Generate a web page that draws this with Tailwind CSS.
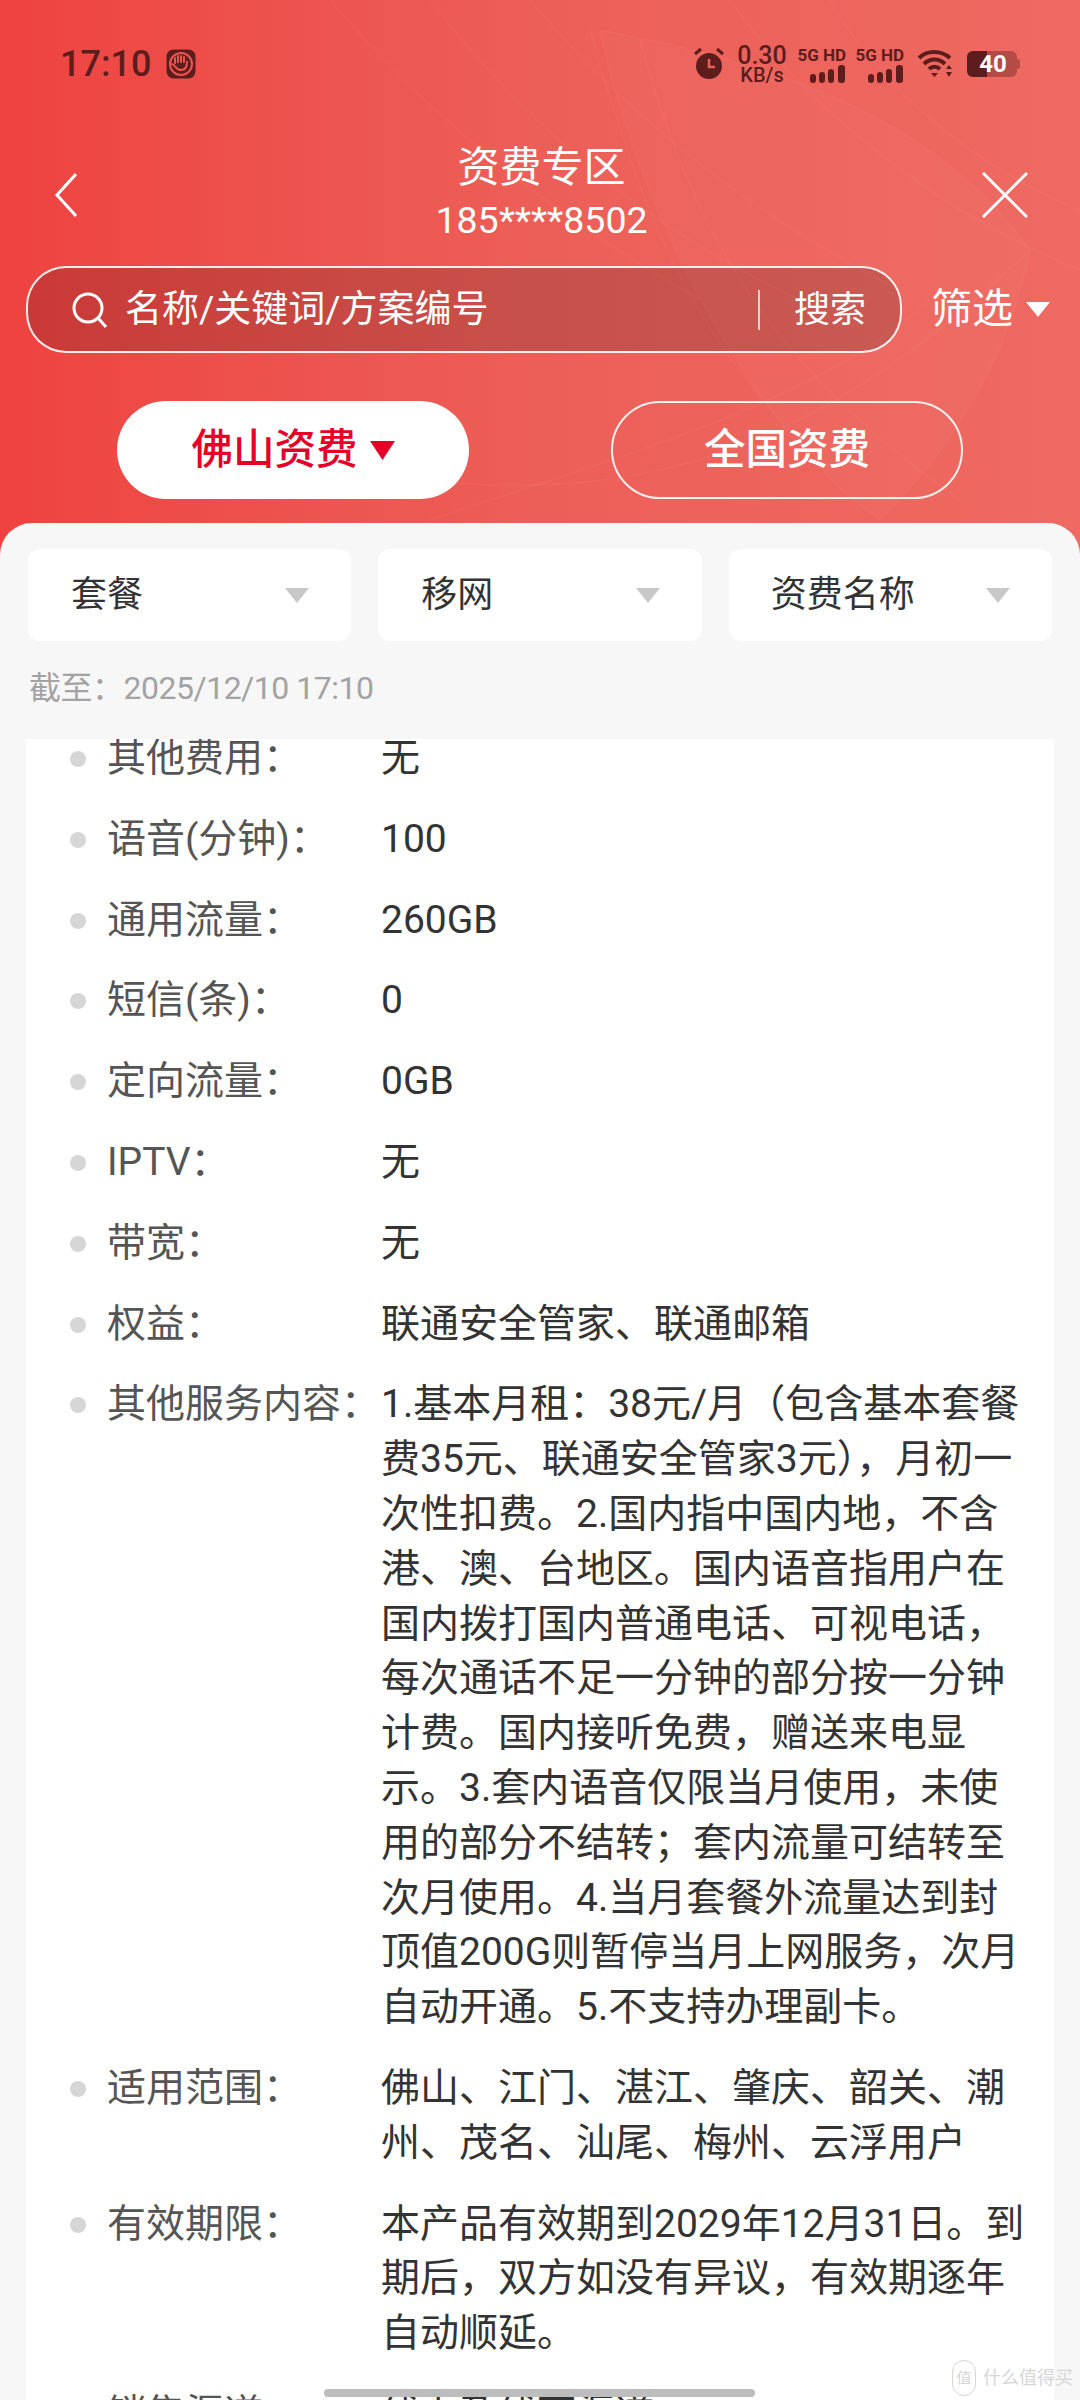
<!DOCTYPE html>
<html lang="zh-CN">
<head>
<meta charset="utf-8">
<script src="https://cdn.jsdelivr.net/npm/@tailwindcss/browser@4"></script>
</head>
<body>
<div class="relative w-[1080px] h-[2400px] overflow-hidden flex flex-col bg-gradient-to-r from-[#ee4240] via-[#ec5f58] to-[#ee6a62] font-['Roboto','Noto_Sans_CJK_SC',sans-serif]">
  <svg class="absolute left-0 top-0 pointer-events-none" width="1080" height="560" viewBox="0 0 1080 560" fill="none" stroke="#ffffff" stroke-opacity="0.05" stroke-width="1">
    <path d="M600 30 C760 60 930 110 1030 250 C1010 350 960 440 880 520 C760 440 640 220 600 30 Z" fill="#ffffff" fill-opacity="0.025"/>
    <path d="M590 30 C640 200 680 330 830 470"/>
    <path d="M640 40 C690 220 760 360 960 500"/>
    <path d="M420 480 C620 500 800 470 1030 250"/>
    <path d="M330 0 C430 120 560 220 700 300"/>
    <path d="M430 0 C530 130 650 230 800 300"/>
    <path d="M530 0 C630 120 760 220 900 290"/>
    <path d="M730 0 C800 100 930 210 1080 270"/>
    <path d="M830 0 C880 90 980 170 1080 210"/>
    <path d="M430 520 C640 450 820 400 930 300"/>
  </svg>

  <!-- status bar -->
  <div class="relative mt-[32px] h-[64px] pl-[60px] pr-[60px] flex items-center justify-between text-[#5e1d1d]">
    <div class="flex items-center gap-[15px]">
      <span class="text-[36px] font-medium leading-none">17:10</span>
      <svg width="30" height="30" viewBox="0 0 30 30"><rect x="0.5" y="0.5" width="29" height="29" rx="7" fill="#5e1d1d"/><circle cx="15" cy="15" r="11" fill="none" stroke="#ee5550" stroke-width="2"/><path d="M9 14 V9 M12 13 V7 M15 13 V7 M18 13 V8 M6 15 C9 15 9 21 15 21 C19 21 21 18 21 13" fill="none" stroke="#ee5550" stroke-width="2" stroke-linecap="round"/></svg>
    </div>
    <div class="flex items-center">
      <svg width="34" height="34" viewBox="0 0 34 34" class="mr-[11px]"><circle cx="17" cy="19" r="13" fill="#5e1d1d"/><path d="M17 12 V20 H23" fill="none" stroke="#ec5f58" stroke-width="2.5"/><path d="M3 7 L9 2 M31 7 L25 2" stroke="#5e1d1d" stroke-width="3"/></svg>
      <div class="w-[50px] flex flex-col items-center mr-[10px]">
        <span class="text-[25px] font-medium leading-[25px]">0.30</span>
        <span class="text-[20px] font-medium leading-[20px] whitespace-nowrap -mt-[3px]">KB/s</span>
      </div>
      <div class="w-[49px] flex flex-col items-end mr-[9px]">
        <span class="text-[17px] font-bold leading-[20px] whitespace-nowrap">5G HD</span>
        <svg width="36" height="18" viewBox="0 0 36 18" fill="#5e1d1d"><rect x="0" y="9" width="6" height="9" rx="3"/><rect x="9" y="7" width="6" height="11" rx="3"/><rect x="18" y="4" width="6" height="14" rx="3"/><rect x="28" y="0" width="7" height="18" rx="3"/></svg>
      </div>
      <div class="w-[49px] flex flex-col items-end mr-[14px]">
        <span class="text-[17px] font-bold leading-[20px] whitespace-nowrap">5G HD</span>
        <svg width="36" height="18" viewBox="0 0 36 18" fill="#5e1d1d"><rect x="0" y="9" width="6" height="9" rx="3"/><rect x="9" y="7" width="6" height="11" rx="3"/><rect x="18" y="4" width="6" height="14" rx="3"/><rect x="28" y="0" width="7" height="18" rx="3"/></svg>
      </div>
      <svg width="38" height="28" viewBox="0 0 38 28" fill="none" stroke="#5e1d1d" stroke-width="4" class="mr-[11px]"><path d="M1 8 C9 0 23 0 32 8"/><path d="M6 14 C12 8 21 8 27 14"/><path d="M11 19 C14 16 19 16 22 19"/><path d="M13 23 L16.500 27 L20 23 Z" fill="#5e1d1d" stroke="none"/><path d="M31 15 L34 19 H28 Z M31 27 L34 22 H28 Z" fill="#5e1d1d" stroke="none"/></svg>
      <div class="relative w-[53px] h-[26px] flex items-center">
        <div class="w-[50px] h-[26px] rounded-[6px] bg-[#5e1d1d]/40 overflow-hidden"><div class="w-[20px] h-[26px] bg-[#5e1d1d]"></div></div>
        <div class="w-[3px] h-[10px] rounded-r-[2px] bg-[#5e1d1d]/40"></div>
        <span class="absolute left-[10px] top-0 w-[32px] text-center text-[24px] leading-[26px] font-bold text-white">40</span>
      </div>
    </div>
  </div>

  <!-- nav -->
  <div class="relative mt-[44px] pl-[55px] pr-[52px] grid grid-cols-[1fr_auto_1fr] items-center text-white">
    <svg class="mt-[6px]" width="22" height="44" viewBox="0 0 22 44" fill="none" stroke="#ffffff" stroke-width="3"><path d="M21 1 L2 22 L21 43"/></svg>
    <div class="flex flex-col items-center">
      <span class="text-[42px] leading-[56px]">资费专区</span>
      <span class="text-[37.500px] leading-[48px]">185****8502</span>
    </div>
    <svg class="justify-self-end mt-[6px]" width="46" height="46" viewBox="0 0 46 46" fill="none" stroke="#ffffff" stroke-width="3"><path d="M1 1 L45 45 M45 1 L1 45"/></svg>
  </div>

  <!-- search -->
  <div class="relative mt-[22px] pl-[26px] flex items-center text-white">
    <div class="w-[876px] h-[87px] rounded-[40px] border-2 border-white/90 bg-black/15 flex items-center pl-[43px]">
      <svg width="38" height="38" viewBox="0 0 38 38" fill="none" stroke="#ffffff" stroke-width="3"><circle cx="17" cy="17" r="14"/><path d="M27 27 L35 36"/></svg>
      <span class="ml-[16px] w-[361px] text-[37px] leading-none whitespace-nowrap">名称/关键词/方案编号</span>
      <div class="ml-[272px] w-[2px] h-[40px] bg-white/70"></div>
      <span class="ml-[34px] text-[36px] leading-none">搜索</span>
    </div>
    <span class="ml-[29px] text-[41px] leading-none">筛选</span>
    <svg class="ml-[13px]" width="24" height="15" viewBox="0 0 24 15" fill="#ffffff"><path d="M0 0 H24 L12 15 Z"/></svg>
  </div>

  <!-- tabs -->
  <div class="relative mt-[48px] pl-[117px] flex gap-[142px]">
    <div class="w-[352px] h-[98px] rounded-[49px] bg-white flex items-center justify-center text-[#e60027] text-[41.500px] font-medium">
      <span class="leading-none">佛山资费</span>
      <svg class="ml-[12px]" width="25" height="19" viewBox="0 0 25 19" fill="#e60027"><path d="M0 0 H25 L12.500 19 Z"/></svg>
    </div>
    <div class="w-[352px] h-[98px] rounded-[49px] border-2 border-white/90 flex items-center justify-center text-white text-[41.500px] font-medium">
      <span class="leading-none">全国资费</span>
    </div>
  </div>

  <!-- content card -->
  <div class="relative mt-[24px] flex-1 min-h-0 rounded-t-[32px] bg-[#f7f7f7] flex flex-col">
    <div class="mt-[26px] px-[28px] grid grid-cols-3 gap-[27px]">
      <div class="h-[92px] rounded-[12px] bg-white pl-[43px] pr-[42px] flex items-center justify-between"><span class="text-[36px] leading-none text-[#333333]">套餐</span><svg width="24" height="15" viewBox="0 0 24 15" fill="#c8c8c8"><path d="M0 0 H24 L12 15 Z"/></svg></div>
      <div class="h-[92px] rounded-[12px] bg-white pl-[43px] pr-[42px] flex items-center justify-between"><span class="text-[36px] leading-none text-[#333333]">移网</span><svg width="24" height="15" viewBox="0 0 24 15" fill="#c8c8c8"><path d="M0 0 H24 L12 15 Z"/></svg></div>
      <div class="h-[92px] rounded-[12px] bg-white pl-[42px] pr-[42px] flex items-center justify-between"><span class="text-[36px] leading-none text-[#333333]">资费名称</span><svg width="24" height="15" viewBox="0 0 24 15" fill="#c8c8c8"><path d="M0 0 H24 L12 15 Z"/></svg></div>
    </div>
    <div class="mt-[22px] pl-[29px] text-[32px] leading-[50px] tracking-[-0.5px] text-[#a3a3a3]">截至：2025/12/10 17:10</div>

    <div class="mt-[26px] mx-[26px] flex-1 min-h-0 overflow-hidden bg-white">
      <div class="-mt-[8px] flex flex-col gap-[26px] text-[39px] leading-[54.800px] text-[#333333]">
        <div class="flex"><i class="mt-[20px] ml-[44px] w-[16px] h-[16px] rounded-full bg-[#d6d6d6]"></i><span class="ml-[21px] w-[274px] text-[#555555]">其他费用：</span><span>无</span></div>
        <div class="flex"><i class="mt-[20px] ml-[44px] w-[16px] h-[16px] rounded-full bg-[#d6d6d6]"></i><span class="ml-[21px] w-[274px] text-[#555555]">语音(分钟)：</span><span>100</span></div>
        <div class="flex"><i class="mt-[20px] ml-[44px] w-[16px] h-[16px] rounded-full bg-[#d6d6d6]"></i><span class="ml-[21px] w-[274px] text-[#555555]">通用流量：</span><span>260GB</span></div>
        <div class="flex"><i class="mt-[20px] ml-[44px] w-[16px] h-[16px] rounded-full bg-[#d6d6d6]"></i><span class="ml-[21px] w-[274px] text-[#555555]">短信(条)：</span><span>0</span></div>
        <div class="flex"><i class="mt-[20px] ml-[44px] w-[16px] h-[16px] rounded-full bg-[#d6d6d6]"></i><span class="ml-[21px] w-[274px] text-[#555555]">定向流量：</span><span>0GB</span></div>
        <div class="flex"><i class="mt-[20px] ml-[44px] w-[16px] h-[16px] rounded-full bg-[#d6d6d6]"></i><span class="ml-[21px] w-[274px] text-[#555555]">IPTV：</span><span>无</span></div>
        <div class="flex"><i class="mt-[20px] ml-[44px] w-[16px] h-[16px] rounded-full bg-[#d6d6d6]"></i><span class="ml-[21px] w-[274px] text-[#555555]">带宽：</span><span>无</span></div>
        <div class="flex"><i class="mt-[20px] ml-[44px] w-[16px] h-[16px] rounded-full bg-[#d6d6d6]"></i><span class="ml-[21px] w-[274px] text-[#555555]">权益：</span><span>联通安全管家、联通邮箱</span></div>
        <div class="flex"><i class="mt-[20px] ml-[44px] w-[16px] h-[16px] rounded-full bg-[#d6d6d6]"></i><span class="ml-[21px] w-[274px] text-[#555555] whitespace-nowrap">其他服务内容：</span><span class="whitespace-nowrap">1.基本月租：38元/月（包含基本套餐<br>费35元、联通安全管家3元），月初一<br>次性扣费。2.国内指中国内地，不含<br>港、澳、台地区。国内语音指用户在<br>国内拨打国内普通电话、可视电话，<br>每次通话不足一分钟的部分按一分钟<br>计费。国内接听免费，赠送来电显<br>示。3.套内语音仅限当月使用，未使<br>用的部分不结转；套内流量可结转至<br>次月使用。4.当月套餐外流量达到封<br>顶值200G则暂停当月上网服务，次月<br>自动开通。5.不支持办理副卡。</span></div>
        <div class="flex"><i class="mt-[20px] ml-[44px] w-[16px] h-[16px] rounded-full bg-[#d6d6d6]"></i><span class="ml-[21px] w-[274px] text-[#555555]">适用范围：</span><span class="whitespace-nowrap">佛山、江门、湛江、肇庆、韶关、潮<br>州、茂名、汕尾、梅州、云浮用户</span></div>
        <div class="flex"><i class="mt-[20px] ml-[44px] w-[16px] h-[16px] rounded-full bg-[#d6d6d6]"></i><span class="ml-[21px] w-[274px] text-[#555555]">有效期限：</span><span class="whitespace-nowrap">本产品有效期到2029年12月31日。到<br>期后，双方如没有异议，有效期逐年<br>自动顺延。</span></div>
        <div class="flex"><i class="mt-[20px] ml-[44px] w-[16px] h-[16px] rounded-full bg-[#d6d6d6]"></i><span class="ml-[21px] w-[274px] text-[#555555]">销售渠道：</span><span>线上及线下渠道</span></div>
      </div>
    </div>
  </div>

  <!-- home indicator -->
  <div class="absolute left-[324px] top-[2389px] w-[431px] h-[8px] rounded-full bg-[#bdbdbd]"></div>
  <!-- watermark -->
  <div class="absolute left-[952px] top-[2360px] flex items-center gap-[7px] text-[#d6d6d6]">
    <span class="w-[24px] h-[36px] rounded-full border border-[#d6d6d6] flex items-center justify-center text-[15px] leading-none">值</span>
    <span class="text-[18px] leading-none whitespace-nowrap">什么值得买</span>
  </div>
</div>
</body>
</html>
